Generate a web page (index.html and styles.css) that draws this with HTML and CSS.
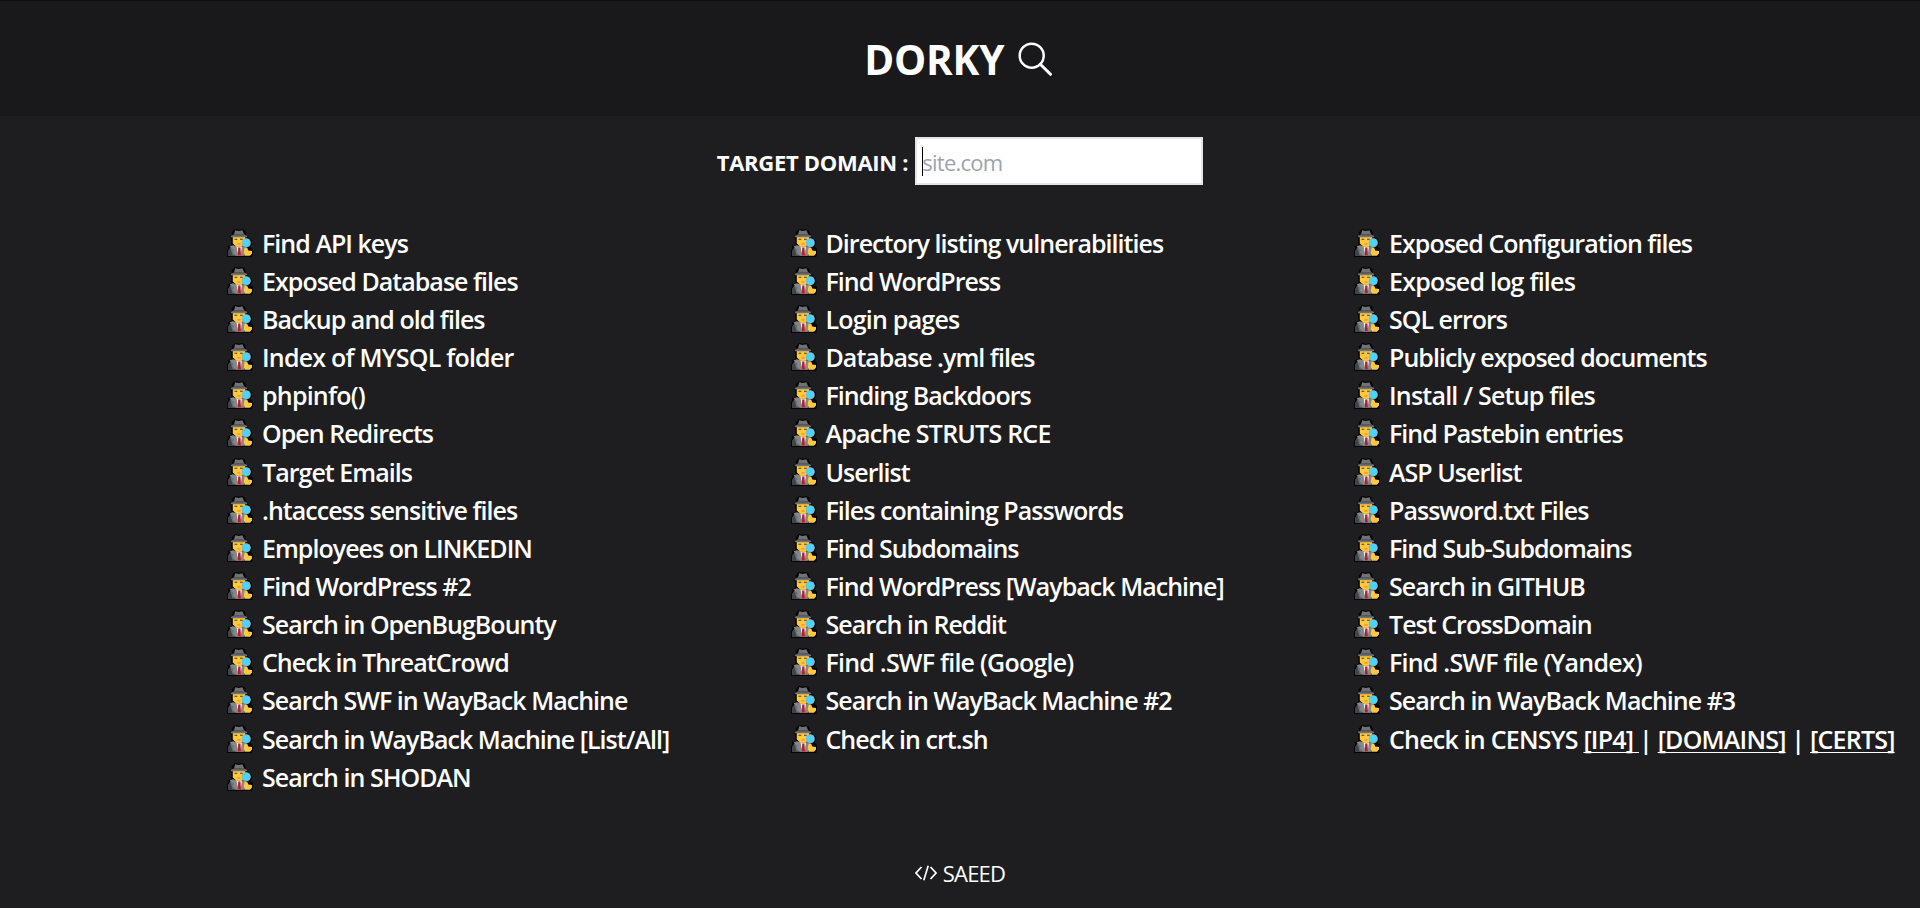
FILE: index.html
```html
<!DOCTYPE html>
<html lang="en">
<head>
<meta charset="utf-8">
<title>DORKY</title>
<link rel="stylesheet" href="styles.css">
</head>
<body>
<svg class="sprite" aria-hidden="true">
  <symbol id="spy" viewBox="0 0 26 28">
    <path d="M4.500 4 7 .7 9 0l3 .8L15 0l3 1.600 1.300 5.200 2 .8v1.300l3.200 2 .8 3-1.300 4L26 20v5L25.200 28H0V21.500l1.500-2.500-1-2 4-.6L4.200 9.700 2.400 7.600l3-1.500z" fill="#050505"/>
    <path d="M1.200 26.700V22l3-4.500h14.500v9.200z" fill="#6b6e71"/>
    <path d="M1.200 26.700V22l2-3 2.600 7.700z" fill="#3f4448"/>
    <path d="M9.200 17.500h5.800l-1 9.200h-2.800z" fill="#e8eaec"/>
    <path d="M11.200 18.500h2.200l.6 8.200h-3.200z" fill="#b51f2e"/>
    <path d="M5.700 16.200 2.500 17.500l4.300 3.500-1.300 2 3.500 3.700h2.200L9 17zM15.500 16.500l-1.500 10.200h2.800l.5-8.500z" fill="#85888b"/>
    <path d="M5.800 7.800h12.400v7l-4 3H9.500L5.800 14.500z" fill="#ffc83d"/>
    <path d="M7.500 9.800h2.800v1H7.500zM13 9.800h2.800v1H13z" fill="#4a3d22"/>
    <path d="M10.400 14.500h3.200v.9h-3.200z" fill="#e0782a"/>
    <path d="M7 5.400 8.200 1.200l3.600.8 3.600-.8 1.800 4.200 3 1.600v1.300H3.800V7z" fill="#707275"/>
    <path d="M6.500 5.400h11.200v1H6.500z" fill="#454648"/>
    <path d="M17.500 18.500h2.600l1.200 3 3.700.5v2.600l-2 2.100h-4.700l-1.600-2.600z" fill="#ffc83d"/>
    <circle cx="19.300" cy="13.700" r="4.500" fill="#8fa3ad"/>
    <circle cx="19.300" cy="13.700" r="4" fill="#4cd3fb"/>
  </symbol>
</svg>

<header class="header">
  <h1 class="title">DORKY</h1>
  <svg class="search-icon" viewBox="0 0 34 34" fill="none" stroke="#fff" stroke-width="2.500"><circle cx="13.700" cy="13.700" r="12"/><path d="M22.300 22.300 32.500 32.300" stroke-width="3" stroke-linecap="round"/></svg>
</header>

<main>
  <div class="target">
    <label class="target-label" for="domain">TARGET DOMAIN :</label>
    <div class="target-field">
      <span class="caret"></span>
      <input class="target-input" id="domain" type="text" placeholder="site.com">
    </div>
  </div>

  <div class="dorks">
    <a class="dork"><svg><use href="#spy"/></svg><span>Find API keys</span></a>
    <a class="dork"><svg><use href="#spy"/></svg><span>Directory listing vulnerabilities</span></a>
    <a class="dork"><svg><use href="#spy"/></svg><span>Exposed Configuration files</span></a>
    <a class="dork"><svg><use href="#spy"/></svg><span>Exposed Database files</span></a>
    <a class="dork"><svg><use href="#spy"/></svg><span>Find WordPress</span></a>
    <a class="dork wide"><svg><use href="#spy"/></svg><span>Exposed log files</span></a>
    <a class="dork"><svg><use href="#spy"/></svg><span>Backup and old files</span></a>
    <a class="dork wide"><svg><use href="#spy"/></svg><span>Login pages</span></a>
    <a class="dork"><svg><use href="#spy"/></svg><span>SQL errors</span></a>
    <a class="dork wide"><svg><use href="#spy"/></svg><span>Index of MYSQL folder</span></a>
    <a class="dork"><svg><use href="#spy"/></svg><span>Database .yml files</span></a>
    <a class="dork"><svg><use href="#spy"/></svg><span>Publicly exposed documents</span></a>
    <a class="dork wide"><svg><use href="#spy"/></svg><span>phpinfo()</span></a>
    <a class="dork"><svg><use href="#spy"/></svg><span>Finding Backdoors</span></a>
    <a class="dork wide"><svg><use href="#spy"/></svg><span>Install / Setup files</span></a>
    <a class="dork"><svg><use href="#spy"/></svg><span>Open Redirects</span></a>
    <a class="dork wide"><svg><use href="#spy"/></svg><span>Apache STRUTS RCE</span></a>
    <a class="dork"><svg><use href="#spy"/></svg><span>Find Pastebin entries</span></a>
    <a class="dork"><svg><use href="#spy"/></svg><span>Target Emails</span></a>
    <a class="dork"><svg><use href="#spy"/></svg><span>Userlist</span></a>
    <a class="dork"><svg><use href="#spy"/></svg><span>ASP Userlist</span></a>
    <a class="dork"><svg><use href="#spy"/></svg><span>.htaccess sensitive files</span></a>
    <a class="dork"><svg><use href="#spy"/></svg><span>Files containing Passwords</span></a>
    <a class="dork"><svg><use href="#spy"/></svg><span>Password.txt Files</span></a>
    <a class="dork"><svg><use href="#spy"/></svg><span>Employees on LINKEDIN</span></a>
    <a class="dork"><svg><use href="#spy"/></svg><span>Find Subdomains</span></a>
    <a class="dork"><svg><use href="#spy"/></svg><span>Find Sub-Subdomains</span></a>
    <a class="dork"><svg><use href="#spy"/></svg><span>Find WordPress #2</span></a>
    <a class="dork"><svg><use href="#spy"/></svg><span>Find WordPress [Wayback Machine]</span></a>
    <a class="dork"><svg><use href="#spy"/></svg><span>Search in GITHUB</span></a>
    <a class="dork"><svg><use href="#spy"/></svg><span>Search in OpenBugBounty</span></a>
    <a class="dork"><svg><use href="#spy"/></svg><span>Search in Reddit</span></a>
    <a class="dork"><svg><use href="#spy"/></svg><span>Test CrossDomain</span></a>
    <a class="dork"><svg><use href="#spy"/></svg><span>Check in ThreatCrowd</span></a>
    <a class="dork wide"><svg><use href="#spy"/></svg><span>Find .SWF file (Google)</span></a>
    <a class="dork wide"><svg><use href="#spy"/></svg><span>Find .SWF file (Yandex)</span></a>
    <a class="dork"><svg><use href="#spy"/></svg><span>Search SWF in WayBack Machine</span></a>
    <a class="dork"><svg><use href="#spy"/></svg><span>Search in WayBack Machine #2</span></a>
    <a class="dork"><svg><use href="#spy"/></svg><span>Search in WayBack Machine #3</span></a>
    <a class="dork"><svg><use href="#spy"/></svg><span>Search in WayBack Machine [List/All]</span></a>
    <a class="dork"><svg><use href="#spy"/></svg><span>Check in crt.sh</span></a>
    <div class="dork wide"><svg><use href="#spy"/></svg><span>Check in CENSYS <u>[IP4] </u>| <u>[DOMAINS]</u> | <u>[CERTS]</u></span></div>
    <a class="dork"><svg><use href="#spy"/></svg><span>Search in SHODAN</span></a>
  </div>
</main>

<footer class="footer">
  <svg class="code-icon" viewBox="0 0 22 16" fill="none" stroke="#fff" stroke-width="1.700"><path d="M6.500 2 1 8l5.500 6M15.500 2 21 8l-5.500 6M13.200.8 8.800 15.200"/></svg>
  <span>SAEED</span>
</footer>
</body>
</html>
```
FILE: styles.css
```css
* {
  box-sizing: border-box;
}

body {
  margin: 0;
  height: 908px;
  overflow: hidden;
  background: #1e1e20;
  color: #fff;
  font-family: "Open Sans", "Noto Sans", sans-serif;
}

.sprite {
  display: none;
}

.header {
  display: flex;
  justify-content: center;
  gap: 13.500px;
  height: 116px;
  padding: 41px 4px 0 0;
  background: #19191b;
  border-top: 1px solid #0d0d0f;
}

.title {
  margin: -1px 0 0;
  height: 38px;
  font-size: 40.500px;
  line-height: 38px;
  font-weight: 700;
  letter-spacing: -0.2px;
}

.search-icon {
  width: 34px;
  height: 34px;
}

.target {
  display: flex;
  justify-content: center;
  align-items: center;
  gap: 7px;
  padding-top: 21px;
}

.target-label {
  padding-top: 2px;
  font-size: 22px;
  font-weight: 700;
  letter-spacing: -0.3px;
}

.target-field {
  position: relative;
}

.target-input {
  display: block;
  width: 288px;
  height: 48px;
  padding: 2px 5px 0;
  border: 2px solid #e5e5e7;
  border-radius: 0;
  background: #fff;
  color: #000;
  font: 22px "Open Sans", "Noto Sans", sans-serif;
  letter-spacing: -0.750px;
}

.target-input::placeholder {
  color: #9ca3af;
  opacity: 1;
}

.caret {
  position: absolute;
  left: 7px;
  top: 10px;
  width: 1px;
  height: 29px;
  background: #000;
}

.dorks {
  display: grid;
  grid-template-columns: repeat(3, 563.500px);
  grid-auto-rows: 38.170px;
  margin-top: 38.500px;
  padding-left: 227px;
}

.dork {
  display: flex;
  align-items: center;
  gap: 9px;
  font-size: 25px;
  line-height: 38px;
  font-weight: 600;
  letter-spacing: -0.970px;
  white-space: nowrap;
}

.dork.wide {
  letter-spacing: -0.780px;
}

.dork svg {
  flex: none;
  width: 26px;
  height: 28px;
}

.dork u {
  text-decoration-thickness: 1px;
  text-underline-offset: 3px;
  text-decoration-skip-ink: none;
}

.footer {
  display: flex;
  justify-content: center;
  align-items: center;
  gap: 6px;
  margin-top: 62.500px;
  font-size: 22px;
  line-height: 30px;
  letter-spacing: -0.800px;
}

.code-icon {
  width: 22px;
  height: 16px;
}
```
